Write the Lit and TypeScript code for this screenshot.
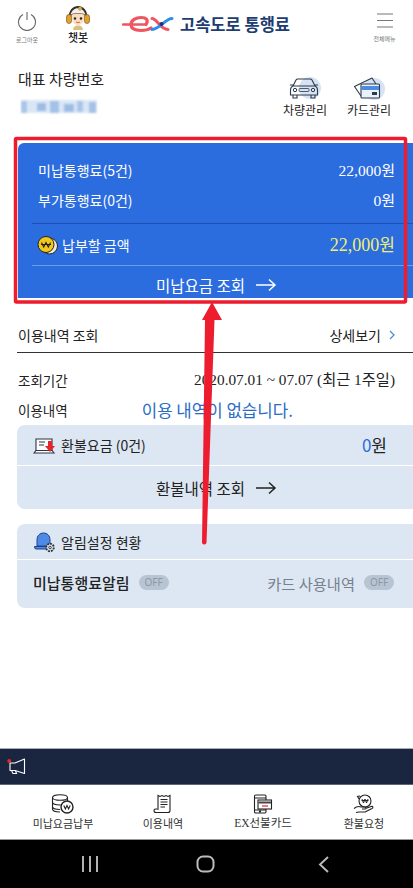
import { LitElement, html, css, svg } from "lit";
import { customElement } from "lit/decorators.js";

const arrow = (stroke: string) => svg`<svg class="arr" width="22" height="14" viewBox="0 0 22 14" fill="none" stroke=${stroke} stroke-width="1.5"><path d="M1 7H20M14 1.5L20 7L14 12.5"/></svg>`;

@customElement("app-root")
export class AppRoot extends LitElement {
  static styles = css`
    :host { display: block; width: 413px; height: 888px; position: relative; overflow: hidden; background: #fff;
      font-family: "Liberation Serif", "Noto Sans CJK KR", serif; color: #222; }
    * { box-sizing: border-box; }
    svg { display: block; flex: none; }
    .page { display: flex; flex-direction: column; height: 888px; }
    .hdr { height: 62px; display: grid; grid-template-columns: 54px 48px 1fr 54px; }
    .hcol { display: flex; flex-direction: column; align-items: center; }
    .tiny { font-size: 6px; color: #777; line-height: 8px; font-family: "Noto Sans CJK KR", sans-serif; }
    .logout { padding-top: 11px; gap: 5px; }
    .bot { padding-top: 5px; }
    .bot span { font: 500 11px/12px "Noto Sans CJK KR", sans-serif; color: #222; }
    .logo { display: flex; align-items: center; gap: 6px; padding: 12px 0 0 20px; height: 36px; }
    .logo span { font: 700 16.5px/20px "Noto Sans CJK KR", sans-serif; color: #1d3c72; }
    .menu { padding: 13px 3px 0 0; gap: 7px; }
    .veh { height: 77px; display: flex; justify-content: space-between; padding: 7px 18px 0 18px; }
    .veh h2 { margin: 0 0 9px; font: 400 15px/20px "Noto Sans CJK KR", sans-serif; color: #222; }
    .acts { display: flex; gap: 18px; padding: 8px 3px 0 0; }
    .act { display: flex; flex-direction: column; align-items: center; gap: 1px; font: 400 12px/16px "Noto Sans CJK KR", sans-serif; color: #222; width: 46px; }
    .plate { margin-left: 2px; }
    .blue { margin: 4px 0 0 18px; height: 155px; background: #2b6cdf; border-top-left-radius: 6px; color: #fff; padding-left: 14px; }
    .row { display: flex; justify-content: space-between; align-items: center; padding: 0 18px 0 6px; }
    .r1 { height: 30px; }
    .r1.first { margin-top: 12px; }
    .lab { font: 400 14px/18px "Noto Sans CJK KR", sans-serif; }
    .val { font-size: 15.5px; line-height: 18px; }
    .val b { font: 400 15px/18px "Noto Sans CJK KR", sans-serif; }
    .sep1 { height: 1px; background: #1c50b4; margin-top: 8px; }
    .sep2 { height: 1px; background: #6f9ce9; }
    .pay { height: 41px; padding-left: 5px; }
    .pay .lab { display: flex; align-items: center; gap: 3px; font-size: 14px; }
    .pay .val { color: #f1ee76; font-size: 18px; }
    .pay .val b { font-size: 17px; }
    .btn { display: flex; justify-content: center; align-items: center; gap: 10px; height: 38px; font: 400 15.5px/18px "Noto Sans CJK KR", sans-serif; padding-right: 12px; }
    .sec { margin-top: 25px; }
    .shead { height: 30px; margin-left: 17px; border-bottom: 1.5px solid #333; display: flex; justify-content: space-between; align-items: center; padding: 0 18px 5px 1px; font: 400 14px/16px "Noto Sans CJK KR", sans-serif; }
    .more { display: flex; align-items: center; gap: 8px; }
    .info { display: flex; justify-content: space-between; align-items: center; padding: 0 18px; height: 30px; font: 400 13.5px/16px "Noto Sans CJK KR", sans-serif; }
    .i1 { margin-top: 12px; }
    .date { font-size: 15.3px; font-family: "Liberation Serif", "Noto Sans CJK KR", serif; }
    .none { color: #2a6cc4; font-size: 16.8px; flex: 1; padding-left: 74px; }
    .lite { margin-left: 17px; background: #dce7f3; border-radius: 8px 0 0 8px; }
    .c2 { height: 84px; }
    .c3 { height: 84px; margin-top: 15px; }
    .chead { display: flex; align-items: center; gap: 4px; padding-left: 16px; border-bottom: 1px solid #fff; font: 400 14px/18px "Noto Sans CJK KR", sans-serif; }
    .c2 .chead { height: 41px; }
    .c3 .chead { height: 36px; }
    .amt { margin-left: auto; margin-right: 26px; font: 400 17px/20px "Noto Sans CJK KR", sans-serif; }
    .amt i { font-style: normal; color: #2b6cdf; }
    .c2 .btn { color: #222; padding: 0 0 0 3px; height: 43px; }
    .alerts { display: flex; align-items: center; height: 47px; padding: 0 19px 2px 16px; font: 500 15px/18px "Noto Sans CJK KR", sans-serif; }
    .pill { width: 30px; height: 15px; border-radius: 8px; background: #b9c4d3; color: #8c98a8; font: 400 10px/15px "Noto Sans", sans-serif; text-align: center; margin-left: 9px; }
    .alerts .card { margin-left: auto; color: #77808c; font-weight: 400; font-size: 15.3px; }
    .grow { flex: 1; }
    .notice { height: 37px; background: #1a2540; border-top: 1px solid #a9aeb8; border-bottom: 1px solid #5e6679; display: flex; align-items: center; padding-left: 7px; }
    .nav { height: 55px; background: #fff; border-bottom: 1px solid #999; display: grid; grid-template-columns: 126px 74px 126px 76px; }
    .ni { display: flex; flex-direction: column; align-items: center; padding-top: 9px; gap: 2px; font: 400 11px/15px "Noto Sans CJK KR", sans-serif; color: #333; }
    .ni.ex { font-family: "Liberation Serif", "Noto Sans CJK KR", serif; font-size: 11.5px; }
    .sys { height: 48px; background: #000; display: grid; grid-template-columns: 180px 52px 1fr; align-items: center; }
    .s1 { justify-self: end; margin-right: 82px; }
    .s2 { justify-self: center; }
    .s3 { justify-self: start; margin-left: 86px; }
    .over { position: absolute; left: 0; top: 0; pointer-events: none; }
  `;

  render() {
    return html`
      <div class="page">
        <div class="hdr">
          <div class="hcol logout">
            <svg width="20" height="20" viewBox="0 0 20 20" fill="none" stroke="#666" stroke-width="1.1">
              <path d="M6 3.5A8.5 8.5 0 1 0 14 3.5M10 1V9"/>
            </svg>
            <span class="tiny">로그아웃</span>
          </div>
          <div class="hcol bot">
            <svg width="28" height="26" viewBox="0 0 28 26">
              <path d="M4.500 13C4.500 5 9 1 14 1S23.500 5 23.500 13" fill="#35302c"/>
              <rect x="2.500" y="9.500" width="5" height="9" rx="2.400" fill="#e2a128" stroke="#6b4a12" stroke-width=".6"/>
              <rect x="20.500" y="9.500" width="5" height="9" rx="2.400" fill="#e2a128" stroke="#6b4a12" stroke-width=".6"/>
              <path d="M6.500 9.500C8 5 11 3.200 14 3.200S20 5 21.500 9.500C17 7.500 11 7.500 6.500 9.500Z" fill="#f4f1ea"/>
              <circle cx="16" cy="3.800" r="2" fill="#d2a84a"/>
              <path d="M7.500 9.500C11 8 17 8 20.500 9.500C20.500 16 18 20 14 20S7.500 16 7.500 9.500Z" fill="#fbdcc0"/>
              <circle cx="11" cy="13.500" r="1.200" fill="#222"/><circle cx="17" cy="13.500" r="1.200" fill="#222"/>
              <path d="M12 17Q14 18.500 16 17" stroke="#c4493c" stroke-width=".8" fill="none"/>
              <path d="M9 25C9.500 21.500 11.500 20.500 14 20.500S18.500 21.500 19 25Z" fill="#d9c07c"/>
            </svg>
            <span>챗봇</span>
          </div>
          <div class="logo">
            <svg width="52" height="18" viewBox="0 0 52 18" fill="none" stroke-linecap="round">
              <path d="M1 9.500H24" stroke="#ee5560" stroke-width="2.400"/>
              <path d="M9 9.500C9 5 14 2.500 19 2.500C24 2.500 27 5 24 9.500M9 9.500C9 14 14 15.500 19 15.500C23 15.500 26 15 29 13" stroke="#ee5560" stroke-width="3.200"/>
              <path d="M30 3.500C35 3.500 38 14.500 46 14.500" stroke="#ee5560" stroke-width="3"/>
              <path d="M50 3.500C43 3.500 38 14.500 30 14.500" stroke="#2f8ee8" stroke-width="3"/>
              <circle cx="39.500" cy="9" r="2" fill="#2a2a78"/>
            </svg>
            <span>고속도로 통행료</span>
          </div>
          <div class="hcol menu">
            <svg width="18" height="15" viewBox="0 0 18 15" stroke="#777" stroke-width="1.1"><path d="M1 1H17M1 7.500H17M1 14H17"/></svg>
            <span class="tiny">전체메뉴</span>
          </div>
        </div>

        <div class="veh">
          <div>
            <h2>대표 차량번호</h2>
            <svg class="plate" width="80" height="18" viewBox="0 0 80 18">
              <defs><filter id="b"><feGaussianBlur stdDeviation="1.2"/></filter></defs>
              <g filter="url(#b)">
                <rect x="1" y="2" width="76" height="13" fill="#dbe6f5"/>
                <rect x="1" y="3" width="6" height="12" fill="#a9c6ea"/>
                <rect x="17" y="5" width="9" height="8" fill="#9dbde4"/>
                <rect x="30" y="3" width="9" height="12" fill="#a3c2e8"/>
                <rect x="44" y="6" width="10" height="8" fill="#9dbde4"/>
                <rect x="57" y="3" width="6" height="11" fill="#a9c6ea"/>
                <rect x="69" y="4" width="7" height="11" fill="#a3c2e8"/>
              </g>
            </svg>
          </div>
          <div class="acts">
            <div class="act">
              <svg width="34" height="24" viewBox="0 0 34 24" fill="none">
                <circle cx="22" cy="11" r="11" fill="#d5e3f4"/>
                <path d="M5 9L8 3Q8.500 2 10 2H22Q23.500 2 24 3L27 9M5 9Q2.500 10 2.500 13V18H29.500V13Q29.500 10 27 9H5ZM2 8H5M27 8H30M5 18V21H9V18M23 18V21H27V18" stroke="#2d3a4a" stroke-width="1.100"/>
                <circle cx="7" cy="13" r="1.700" stroke="#2d3a4a"/><circle cx="25" cy="13" r="1.700" stroke="#2d3a4a"/>
                <rect x="11" y="11.500" width="10" height="3" rx="1" stroke="#2d3a4a" stroke-width=".8"/>
              </svg>
              <span>차량관리</span>
            </div>
            <div class="act">
              <svg width="32" height="24" viewBox="0 0 32 24" fill="none">
                <circle cx="21" cy="12" r="11" fill="#d5e3f4"/>
                <path d="M8 19L1.500 9.500L19 1L23 7" stroke="#2d3a4a" stroke-width="1.100" stroke-linejoin="round"/>
                <rect x="8" y="7" width="18.500" height="14" rx="1" fill="#e9f1fb" stroke="#2d3a4a" stroke-width="1.100"/>
                <rect x="8.500" y="9" width="17.500" height="4" fill="#4d8be0"/>
                <rect x="19" y="15" width="5" height="3" fill="#2d3a4a"/>
              </svg>
              <span>카드관리</span>
            </div>
          </div>
        </div>

        <div class="blue">
          <div class="row r1 first"><span class="lab">미납통행료(5건)</span><span class="val">22,000<b>원</b></span></div>
          <div class="row r1"><span class="lab">부가통행료(0건)</span><span class="val">0<b>원</b></span></div>
          <div class="sep1"></div>
          <div class="row pay">
            <span class="lab">
              <svg width="22" height="20" viewBox="0 0 22 20">
                <circle cx="12.500" cy="11" r="8" fill="#efe9d8" stroke="#222" stroke-width="1"/>
                <circle cx="9" cy="9.500" r="8" fill="#f3c81d" stroke="#222" stroke-width="1"/>
                <path d="M4.500 7.500L6.700 12L9 7.500L11.300 12L13.500 7.500M4 9.500H14" stroke="#222" stroke-width="1.100" fill="none"/>
              </svg>
              납부할 금액
            </span>
            <span class="val">22,000<b>원</b></span>
          </div>
          <div class="sep2"></div>
          <div class="btn"><span>미납요금 조회</span>${arrow("#fff")}</div>
        </div>

        <div class="sec">
          <div class="shead"><span>이용내역 조회</span>
            <span class="more">상세보기
              <svg width="6" height="10" viewBox="0 0 6 10" fill="none" stroke="#4d8fd6" stroke-width="1.300"><path d="M1 1L5 5L1 9"/></svg>
            </span>
          </div>
          <div class="info i1"><span>조회기간</span><span class="date">2020.07.01 ~ 07.07 (최근 1주일)</span></div>
          <div class="info"><span>이용내역</span><span class="none">이용 내역이 없습니다.</span></div>
        </div>

        <div class="lite c2">
          <div class="chead">
            <svg width="24" height="17" viewBox="0 0 24 17" fill="none">
              <path d="M3 14V2H19V14" fill="#fff" stroke="#2d3340" stroke-width="1.100"/>
              <path d="M1 16L3 13.500H19L21 16Z" fill="#fff" stroke="#2d3340" stroke-width="1.100"/>
              <path d="M6 5H12M6 8H11" stroke="#2d3340" stroke-width="1.100"/>
              <path d="M15 4H19V9H22L17 15L12 9H15Z" fill="#e5252a"/>
            </svg>
            <span>환불요금 (0건)</span>
            <span class="amt"><i>0</i>원</span>
          </div>
          <div class="btn"><span>환불내역 조회</span>${arrow("#222")}</div>
        </div>

        <div class="lite c3">
          <div class="chead">
            <svg width="24" height="22" viewBox="0 0 24 22" fill="none">
              <path d="M4 15V9C4 4.500 7 2 10.500 2S17 4.500 17 9V15Z" fill="#4d8be6" stroke="#23408a" stroke-width="1"/>
              <path d="M1.500 15.500H17V18H3Q1.500 18 1.500 15.500Z" fill="#4d8be6" stroke="#23408a" stroke-width="1"/>
              <circle cx="17" cy="16.500" r="3.800" fill="#dce7f3" stroke="#333" stroke-width="1.800" stroke-dasharray="2 .9"/>
              <circle cx="17" cy="16.500" r="1.300" fill="#dce7f3" stroke="#333" stroke-width=".9"/>
            </svg>
            <span>알림설정 현황</span>
          </div>
          <div class="alerts">
            <span>미납통행료알림</span><span class="pill">OFF</span>
            <span class="card">카드 사용내역</span><span class="pill">OFF</span>
          </div>
        </div>

        <div class="grow"></div>

        <div class="notice">
          <svg width="19" height="17" viewBox="0 0 19 17" fill="none" stroke="#fff" stroke-width="1.100">
            <path d="M17.500 1V15.500L8 12.500H3V5H8Z" stroke-linejoin="round"/>
            <path d="M4.500 12.500L6 15.500H9.500L8.500 12.700"/>
            <circle cx="2.200" cy="3" r="2" fill="#e8262d" stroke="none"/>
          </svg>
        </div>

        <div class="nav">
          <div class="ni">
            <svg width="24" height="20" viewBox="0 0 24 20" fill="none" stroke="#222" stroke-width="1.100">
              <ellipse cx="9" cy="3.500" rx="7.500" ry="2.800"/>
              <path d="M1.500 3.500V15C1.500 17 5 18 9 18M16.500 3.500V8M1.500 8C1.500 10 5 11 9 11S14 10.500 16.500 8M1.500 12.500C1.500 14.500 5 15.500 9 15.500"/>
              <circle cx="16" cy="13" r="6" fill="#fff" stroke-width="1.400"/>
              <path d="M12.800 11.500L14.400 15L16 11.500L17.600 15L19.200 11.500" stroke-width="1.100"/>
            </svg>
            <span>미납요금납부</span>
          </div>
          <div class="ni">
            <svg width="20" height="20" viewBox="0 0 20 20" fill="none" stroke="#222" stroke-width="1.100">
              <path d="M5 16V1.500L7 2.500L9 1.500L11 2.500L13 1.500L15 2.500L17 1.500V16.500C17 18 16 18.500 15 18.500H3"/>
              <path d="M3 18.500C1.500 18.500 1 17.500 1 16.500C1 15.500 1.500 15 2.500 15H4.500"/>
              <path d="M7.500 5.500H14.500M7.500 8H14.500M7.500 10.500H14.500M7.500 13H12"/>
            </svg>
            <span>이용내역</span>
          </div>
          <div class="ni ex">
            <svg width="20" height="20" viewBox="0 0 20 20" fill="none" stroke="#222" stroke-width="1.100">
              <rect x="1.500" y="1" width="11.500" height="18" rx="1.200"/>
              <path d="M1.500 4H13M1.500 16H13"/><circle cx="7" cy="17.500" r=".6" fill="#222"/>
              <rect x="5" y="6" width="13.500" height="9" fill="#fff"/>
              <rect x="5.500" y="7.500" width="12.500" height="2" fill="#444" stroke="none"/>
              <path d="M9 12H15" stroke="#e5252a" stroke-width="1.200"/>
            </svg>
            <span>EX선불카드</span>
          </div>
          <div class="ni">
            <svg width="22" height="20" viewBox="0 0 22 20" fill="none" stroke="#222" stroke-width="1.100">
              <circle cx="12" cy="7" r="6"/>
              <path d="M9 5L10.500 9L12 5L13.500 9L15 5M8.500 6.500H15.500" stroke-width="1"/>
              <path d="M7 2L4.500 2.500L6 5"/>
              <path d="M1 14.500C4 12 6 12 8 13H12C13.500 13 13.500 15 12 15H9M12.500 14.500L18 12.500C20 12 20.500 13.500 19 14.500L12 18H6L3 18.500" stroke-linejoin="round"/>
            </svg>
            <span>환불요청</span>
          </div>
        </div>

        <div class="sys">
          <svg class="s1" width="16" height="16" viewBox="0 0 16 16" stroke="#bbb" stroke-width="1.900"><path d="M1 0V16M8 0V16M15 0V16"/></svg>
          <svg class="s2" width="20" height="18" viewBox="0 0 20 18" fill="none" stroke="#bbb" stroke-width="2"><rect x="1.500" y="1.500" width="16" height="15" rx="5.500"/></svg>
          <svg class="s3" width="12" height="17" viewBox="0 0 12 17" fill="none" stroke="#bbb" stroke-width="1.900"><path d="M10 1L2 8.500L10 16"/></svg>
        </div>
      </div>

      <svg class="over" width="413" height="888" viewBox="0 0 413 888">
        <rect x="15.500" y="138.500" width="390" height="163.500" rx="1" fill="none" stroke="#ed1c2e" stroke-width="3.500"/>
        <path d="M212 302L222 320H214.500L206.500 543Q204 546 202 543L205 320H202Z" fill="#ed1c2e"/>
      </svg>
    `;
  }
}
